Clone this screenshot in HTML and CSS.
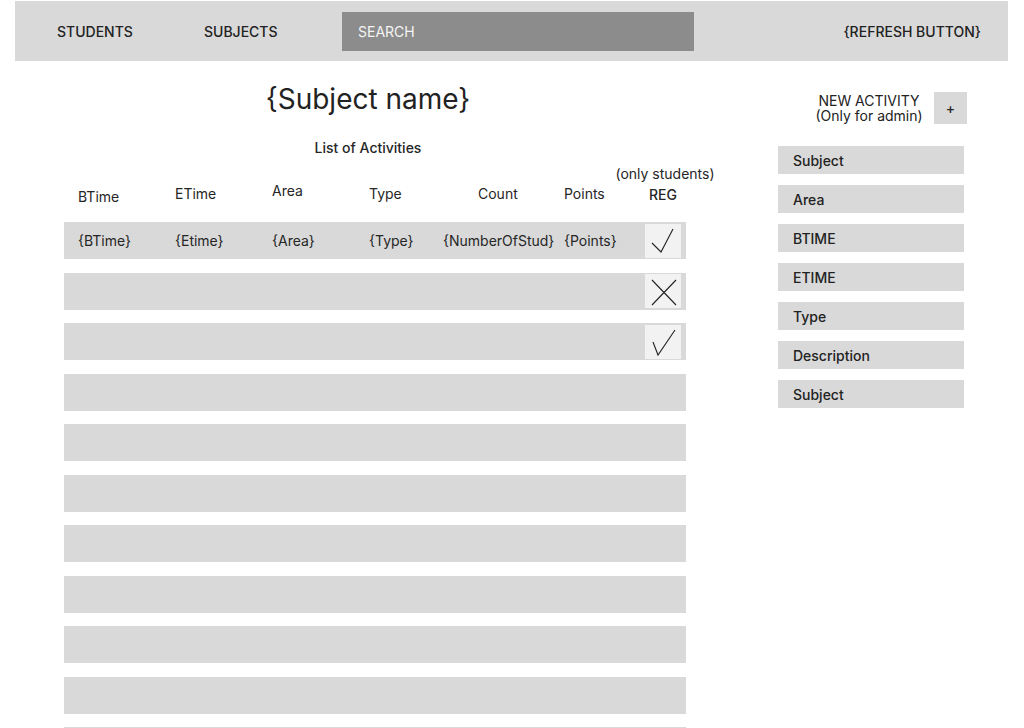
FILE: index.html
```html
<!DOCTYPE html>
<html>
<head>
<meta charset="utf-8">
<link rel="stylesheet" href="styles.css">
</head>
<body>
<header class="topbar">
  <span class="nav nav-students">STUDENTS</span>
  <span class="nav nav-subjects">SUBJECTS</span>
  <div class="search">SEARCH</div>
  <span class="refresh">{REFRESH BUTTON}</span>
</header>
<div class="main">
  <section class="left">
    <h1 class="title">{Subject name}</h1>
    <div class="list-title">List of Activities</div>
    <div class="grid head">
      <span class="h h-btime">BTime</span>
      <span class="h">ETime</span>
      <span class="h h-area">Area</span>
      <span class="h">Type</span>
      <span class="h h-count">Count</span>
      <span class="h">Points</span>
      <span class="h h-reg"><span>(only students)</span><span>REG</span></span>
    </div>
    <div class="rows">
      <div class="grid row">
        <span>{BTime}</span><span>{Etime}</span><span>{Area}</span><span>{Type}</span><span>{NumberOfStud}</span><span>{Points}</span>
        <span class="box"><svg width="36" height="34" viewBox="0 0 36 34"><path d="M7 19 L16 28 L28 5" fill="none" stroke="#222" stroke-width="1.1"/></svg></span>
      </div>
      <div class="grid row">
        <span></span><span></span><span></span><span></span><span></span><span></span>
        <span class="box"><svg width="36" height="34" viewBox="0 0 36 34"><path d="M7 6 L31 31 M31 6 L7 31" fill="none" stroke="#222" stroke-width="1.1"/></svg></span>
      </div>
      <div class="grid row">
        <span></span><span></span><span></span><span></span><span></span><span></span>
        <span class="box"><svg width="36" height="34" viewBox="0 0 36 34"><path d="M8 17 L13 30 L30 5" fill="none" stroke="#222" stroke-width="1.1"/></svg></span>
      </div>
      <div class="row"></div>
      <div class="row"></div>
      <div class="row"></div>
      <div class="row"></div>
      <div class="row"></div>
      <div class="row"></div>
      <div class="row"></div>
      <div class="row"></div>
    </div>
  </section>
  <aside class="right">
    <div class="new-activity">
      <div class="new-text">NEW ACTIVITY<br>(Only for admin)</div>
      <div class="plus">+</div>
    </div>
    <div class="fields">
      <div class="field">Subject</div>
      <div class="field">Area</div>
      <div class="field">BTIME</div>
      <div class="field">ETIME</div>
      <div class="field">Type</div>
      <div class="field">Description</div>
      <div class="field">Subject</div>
    </div>
  </aside>
</div>
</body>
</html>
```
FILE: styles.css
```css
html, body {
  margin: 0;
  padding: 0;
  background: #ffffff;
}
body {
  font-family: Inter, "Noto Sans", sans-serif;
  font-size: 14px;
  color: #262626;
  width: 1024px;
  height: 728px;
  overflow: hidden;
}
.topbar {
  margin: 1px 0 0 15px;
  width: 993px;
  height: 60px;
  background: #d9d9d9;
  display: flex;
  align-items: center;
  box-sizing: border-box;
  padding: 0 27px 0 42px;
}
.nav {
  font-weight: 500;
  font-size: 14px;
  color: #222;
}
.nav-students { width: 147px; }
.nav-subjects { width: 138px; }
.search {
  width: 352px;
  height: 39px;
  background: #8c8c8c;
  color: #f4f4f4;
  box-sizing: border-box;
  padding-left: 16px;
  display: flex;
  align-items: center;
  font-size: 14px;
  margin-top: 1px;
}
.refresh {
  margin-left: auto;
  font-weight: 500;
  color: #222;
}
.main {
  display: flex;
}
.left {
  margin-left: 64px;
  width: 622px;
}
.title {
  margin: 20px 0 0 0;
  padding-right: 14px;
  text-align: center;
  font-size: 28px;
  font-weight: 400;
  line-height: 36px;
  color: #222;
}
.list-title {
  margin-top: 22px;
  padding-right: 14px;
  text-align: center;
  font-weight: 500;
  line-height: 18px;
}
.grid {
  display: grid;
  grid-template-columns: 97px 97px 97px 74px 121px 81px 36px;
  padding-left: 14px;
  box-sizing: border-box;
}
.head {
  height: 70px;
  align-items: end;
  padding-bottom: 16px;
  margin-top: -5px;
}
.h {
  line-height: 18px;
  margin-bottom: 3px;
  white-space: nowrap;
}
.h-btime { margin-bottom: 0; }
.h-area { margin-bottom: 6px; }
.h-count { margin-left: 35px; }
.h-reg {
  display: flex;
  flex-direction: column;
  align-items: center;
  justify-self: center;
  margin-bottom: 1px;
  line-height: 21px;
  font-weight: 500;
}
.h-reg span:first-child { font-weight: 400; margin-left: 4px; }
.rows {
  display: flex;
  flex-direction: column;
  gap: 13.5px;
}
.row {
  height: 37px;
  background: #d9d9d9;
  align-items: center;
  white-space: nowrap;
}
.box {
  width: 36px;
  height: 34px;
  background: #f2f2f2;
  display: block;
}
.box svg { display: block; }
.right {
  margin-left: 92px;
  width: 190px;
}
.new-activity {
  display: flex;
  align-items: center;
  margin-top: 31px;
  height: 32px;
  padding-left: 26px;
}
.new-text {
  flex: 0 0 130px;
  text-align: center;
  line-height: 15px;
  font-weight: 400;
  color: #222;
}
.plus {
  flex: 0 0 33px;
  height: 32px;
  background: #d9d9d9;
  display: flex;
  align-items: center;
  justify-content: center;
  font-size: 14px;
  font-weight: 500;
}
.fields {
  width: 186px;
  margin-top: 22px;
  display: flex;
  flex-direction: column;
  gap: 11px;
}
.field {
  height: 28px;
  background: #d9d9d9;
  display: flex;
  align-items: center;
  padding-left: 15px;
  font-weight: 500;
  color: #222;
}
```
